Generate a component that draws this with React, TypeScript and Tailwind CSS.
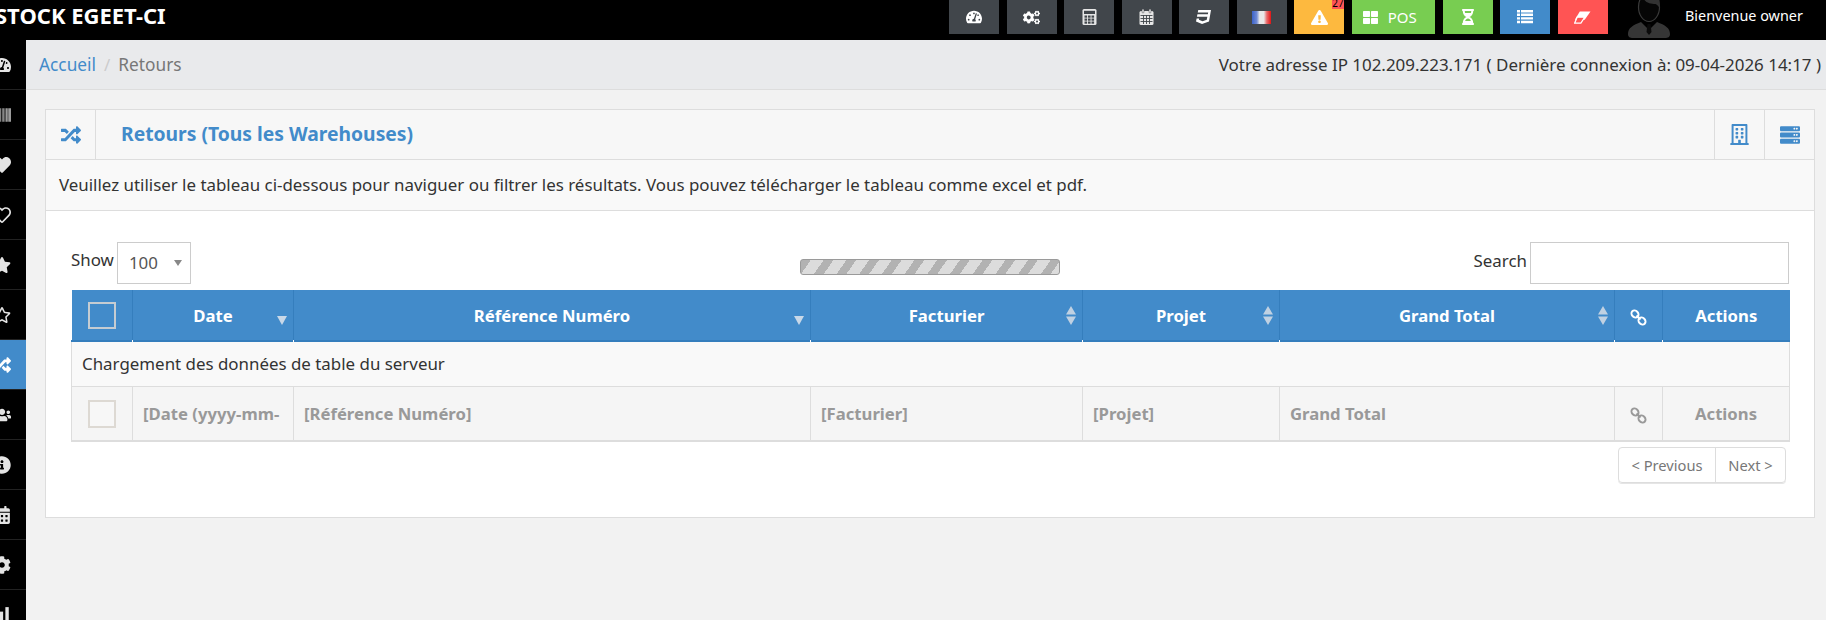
import { FaTachometerAlt, FaBarcode, FaHeart, FaRegHeart, FaStar, FaRegStar, FaRandom, FaUsers, FaInfoCircle, FaCalendarAlt, FaCog, FaCogs, FaCss3, FaExclamationTriangle, FaThLarge, FaHourglassHalf, FaRegBuilding, FaServer } from "react-icons/fa";
import type { ReactNode } from "react";

function BarsIcon({ className }: { className?: string }) {
  return (
    <svg viewBox="0 0 16 16" className={className} fill="currentColor">
      <rect x="1" y="9" width="3" height="6" /><rect x="6" y="5" width="3" height="10" /><rect x="11" y="1" width="3" height="14" />
    </svg>
  );
}

const sideIcons = [FaTachometerAlt, FaBarcode, FaHeart, FaRegHeart, FaStar, FaRegStar, FaRandom, FaUsers, FaInfoCircle, FaCalendarAlt, FaCog, BarsIcon];

function TopButton({ className, children }: { className: string; children: ReactNode }) {
  return <div className={`h-[34px] flex items-center justify-center text-white shrink-0 ${className}`}>{children}</div>;
}

function GridIcon({ calendar }: { calendar?: boolean }) {
  const xs = [2.5, 6, 9.5];
  const ys = [6.5, 9.5, 12.5];
  return (
    <svg width="15" height="16" viewBox="0 0 15 16" className="text-[#e6e6e6]">
      {calendar ? (
        <>
          <rect x="0.5" y="2" width="14" height="14" rx="1.5" fill="currentColor" />
          <rect x="3" y="0" width="2" height="4" rx="1" fill="currentColor" stroke="#41464b" strokeWidth="0.5" />
          <rect x="10" y="0" width="2" height="4" rx="1" fill="currentColor" stroke="#41464b" strokeWidth="0.5" />
          <path d="M1.5 6.5h12M1.5 9.5h12M1.5 12.5h12M4.5 6v9M7.5 6v9M10.5 6v9" stroke="#41464b" strokeWidth="0.9" />
        </>
      ) : (
        <>
          <rect x="0.5" y="0" width="14" height="16" rx="1.5" fill="currentColor" />
          <rect x="2" y="1.8" width="11" height="3.2" fill="#41464b" />
          {ys.map((y) => xs.map((x) => <rect key={`${x}-${y}`} x={x} y={y} width="2.6" height="2.2" fill="#41464b" />))}
        </>
      )}
    </svg>
  );
}

function ListIcon() {
  return (
    <svg width="16" height="14" viewBox="0 0 16 14" fill="currentColor">
      <path d="M0 0h3v2.4H0zM4 0h12v2.4H4zM0 3.6h3V6H0zM4 3.6h12V6H4zM0 7.2h3v2.4H0zM4 7.2h12v2.4H4zM0 10.8h3v2.4H0zM4 10.8h12v2.4H4z" />
    </svg>
  );
}

function EraserIcon() {
  return (
    <svg width="17" height="13" viewBox="0 0 17 13">
      <path d="M5.8 0.5h10.7l-5.8 8.2H0.8z" fill="#ffffff" />
      <path d="M3.2 6.2h7.6l-3.9 6H0.6z" fill="#ff5454" stroke="#ffffff" strokeWidth="1.2" />
    </svg>
  );
}

function LinkIcon({ className }: { className?: string }) {
  return (
    <svg viewBox="0 0 17 17" width="17" height="17" className={`inline-block align-middle ${className ?? ""}`} fill="none" stroke="currentColor">
      <ellipse cx="5" cy="5" rx="3.2" ry="3.8" strokeWidth="2" transform="rotate(-45 5 5)" />
      <ellipse cx="12" cy="12" rx="3.2" ry="3.8" strokeWidth="2" transform="rotate(-45 12 12)" />
      <path d="M6.5 6.5l4 4" strokeWidth="2" />
    </svg>
  );
}

function Avatar() {
  return (
    <svg width="45" height="38" viewBox="0 0 45 38" className="shrink-0">
      <path d="M2 34c0-6 5-9 13-12l8 8 8-8c8 3 13 6 13 12 0 3-2 4-5 4H7c-3 0-5-1-5-4z" fill="#363636" />
      <path d="M21.500 24h3l1 8-2.500 3-2.500-3z" fill="#0a0a0a" />
      <ellipse cx="23" cy="7" rx="10.500" ry="14.500" fill="#060606" stroke="#3a3a3a" strokeWidth="1.200" />
      <path d="M12.500 0h21v8c-1-2-2-3-4-4-4 0-9-1-11-4z" fill="#333333" />
    </svg>
  );
}

function Th({ children, sort, notch = true }: { children?: ReactNode; sort?: "desc" | "both"; notch?: boolean }) {
  return (
    <th className="relative border-r border-[#357ebd] last:border-r-0 p-0 pt-[1px] font-bold text-white text-[16.7px] text-center">
      {children}
      {sort === "desc" && (
        <svg width="10" height="9" viewBox="0 0 10 9" className="absolute right-[6px] top-[26px]"><path d="M0 0h10L5 9z" fill="#c8d8e8" /></svg>
      )}
      {sort === "both" && (
        <svg width="12" height="19" viewBox="0 0 12 19" className="absolute right-[5px] top-[16px]"><path d="M6 0l5 8.500H1zM1 10.500h10L6 19z" fill="#c0d1e2" /></svg>
      )}
      {notch && <span className="absolute -right-px -bottom-[2px] w-px h-[2px] bg-white" />}
    </th>
  );
}

function Td({ children, center }: { children?: ReactNode; center?: boolean }) {
  return <td className={`border-r border-[#dddddd] last:border-r-0 px-[10px] pt-[1px] font-bold text-[#999999] text-[16.7px] whitespace-nowrap overflow-hidden ${center ? "text-center" : ""}`}>{children}</td>;
}

export default function App() {
  return (
    <div className="w-[1826px] h-[620px] overflow-hidden bg-[#f2f2f2] text-[#333333] text-[16.9px] font-['Noto_Sans','Open_Sans',sans-serif] flex flex-col">
      <header className="h-10 bg-black shrink-0 flex items-start overflow-hidden">
        <div className="-ml-[5px] text-white font-bold text-[22px] leading-[30px] whitespace-nowrap">STOCK EGEET-CI</div>
        <nav className="ml-auto flex items-start">
          <div className="flex gap-[7.5px]">
            <TopButton className="w-[50px] bg-[#41464b]"><FaTachometerAlt size={16} /></TopButton>
            <TopButton className="w-[50px] bg-[#41464b]"><FaCogs size={17} /></TopButton>
            <TopButton className="w-[50px] bg-[#41464b]"><GridIcon /></TopButton>
            <TopButton className="w-[50px] bg-[#41464b]"><GridIcon calendar /></TopButton>
            <TopButton className="w-[50px] bg-[#41464b]"><FaCss3 size={16} /></TopButton>
            <TopButton className="w-[50px] bg-[#41464b]">
              <span className="w-[19px] h-[13px] bg-[linear-gradient(90deg,#3c63c9_0%,#6f8ad6_25%,#e8e8e8_40%,#e8e8e8_62%,#e86a6a_78%,#e01414_100%)]" />
            </TopButton>
            <TopButton className="w-[50px] bg-[#fdb93f] relative">
              <FaExclamationTriangle size={17} />
              <span className="absolute right-0 top-0 w-[12px] h-[9px] bg-[#ff5454] text-black text-[10px] leading-[7px] text-center">27</span>
            </TopButton>
            <TopButton className="w-[83.5px] bg-[#78cd51] gap-[10px] pr-[7px] text-[15px]"><FaThLarge size={15} />POS</TopButton>
            <TopButton className="w-[50px] bg-[#78cd51]"><FaHourglassHalf size={16} /></TopButton>
            <TopButton className="w-[50px] bg-[#428bca]"><ListIcon /></TopButton>
            <TopButton className="w-[50px] bg-[#ff5454]"><EraserIcon /></TopButton>
          </div>
          <div className="ml-[18.500px]"><Avatar /></div>
          <div className="ml-[14px] w-[141px] text-white text-[14.400px] leading-[32px] whitespace-nowrap">Bienvenue owner</div>
        </nav>
      </header>
      <div className="flex-1 flex min-h-0">
        <aside className="w-[26px] bg-black shrink-0 overflow-hidden">
          {sideIcons.map((Icon, i) => (
            <div key={i} className={`h-[50px] flex items-center border-b border-[#222222] text-[#e4e4e4] ${i === 6 ? "bg-[#428bca] text-white border-[#428bca]" : ""}`}>
              <Icon className="-ml-[7px] w-[18px] h-[18px] shrink-0" />
            </div>
          ))}
        </aside>
        <main className="flex-1 min-w-0">
          <div className="h-[50px] bg-[#e9eaec] border-b border-[#dddddd] flex items-center pl-[13px] pr-[5px] pt-[1px]">
            <a className="text-[#428bca] text-[17.300px]">Accueil</a>
            <span className="text-[#cccccc] mx-[8px]">/</span>
            <span className="text-[#777777] text-[17.300px]">Retours</span>
            <span className="ml-auto text-[16.950px]">Votre adresse IP 102.209.223.171 ( Dernière connexion à: 09-04-2026 14:17 )</span>
          </div>
          <section className="ml-[19px] mr-[11px] mt-[19px] h-[409px] bg-white border border-[#dddddd]">
            <div className="h-[50px] bg-[#f7f7f7] border-b border-[#dddddd] flex items-stretch">
              <div className="w-[50px] border-r border-[#dddddd] flex items-center justify-center text-[#428bca]"><FaRandom size={20} /></div>
              <h2 className="ml-[25px] self-center font-bold text-[19.300px] text-[#428bca]">Retours (Tous les Warehouses)</h2>
              <div className="ml-auto w-[50px] border-l border-[#dddddd] flex items-center justify-center text-[#428bca]"><FaRegBuilding size={21} /></div>
              <div className="w-[50px] border-l border-[#dddddd] flex items-center justify-center text-[#428bca]"><FaServer size={20} /></div>
            </div>
            <div className="h-[51px] bg-[#f9f9f9] border-b border-[#dddddd] flex items-center pl-[13px]">
              Veuillez utiliser le tableau ci-dessous pour naviguer ou filtrer les résultats. Vous pouvez télécharger le tableau comme excel et pdf.
            </div>
            <div className="px-[25px]">
              <div className="h-[79px] pt-[31px] flex items-start">
                <div className="flex items-start gap-[3px] w-[119px]">
                  <span className="leading-[36px]">Show</span>
                  <div className="w-[74px] h-[42px] border border-[#cccccc] flex items-center justify-between pl-[11px] pr-[8px] shrink-0">
                    <span className="text-[#555555]">100</span>
                    <svg width="8" height="6" viewBox="0 0 8 6"><path d="M0 0h8L4 6z" fill="#888888" /></svg>
                  </div>
                </div>
                <div className="w-[260px] h-[16px] ml-[610px] mt-[17px] rounded-[3px] bg-[repeating-linear-gradient(125deg,#b2b2b2_0px,#b2b2b2_8px,#dcdcdc_8px,#dcdcdc_18.6px)] border border-[#9a9a9a]" />
                <div className="flex items-start gap-[3px] ml-auto">
                  <span className="leading-[38px]">Search</span>
                  <div className="w-[259px] h-[42px] border border-[#cccccc]" />
                </div>
              </div>
              <table className="w-[1718px] table-fixed border-collapse">
                <colgroup>
                  <col className="w-[61px]" /><col className="w-[161px]" /><col className="w-[517px]" /><col className="w-[272px]" /><col className="w-[197px]" /><col className="w-[335px]" /><col className="w-[48px]" /><col className="w-[127px]" />
                </colgroup>
                <thead>
                  <tr className="h-[51px] bg-[#428bca] border-b-2 border-[#357ebd]">
                    <Th><span className="inline-block align-middle w-[28px] h-[27px] border-2 border-[#c5ccd2]" /></Th>
                    <Th sort="desc">Date</Th>
                    <Th sort="desc">Référence Numéro</Th>
                    <Th sort="both">Facturier</Th>
                    <Th sort="both">Projet</Th>
                    <Th sort="both">Grand Total</Th>
                    <Th><LinkIcon /></Th>
                    <Th notch={false}>Actions</Th>
                  </tr>
                </thead>
                <tbody>
                  <tr className="h-[45px] bg-[#f9f9f9] border-b border-x border-[#dddddd]">
                    <td colSpan={8} className="pl-[10px]">Chargement des données de table du serveur</td>
                  </tr>
                  <tr className="h-[55px] bg-[#f5f5f5] border-b-2 border-x border-[#dddddd]">
                    <Td center><span className="inline-block align-middle w-[28px] h-[28px] border-2 border-[#ddd9d3] bg-[#f7f7f7]" /></Td>
                    <Td>[Date (yyyy-mm-</Td>
                    <Td>[Référence Numéro]</Td>
                    <Td>[Facturier]</Td>
                    <Td>[Projet]</Td>
                    <Td>Grand Total</Td>
                    <Td center><LinkIcon /></Td>
                    <Td center>Actions</Td>
                  </tr>
                </tbody>
              </table>
              <div className="flex justify-end mt-[5px] pr-[3px]">
                <div className="h-[36px] flex border border-[#dddddd] rounded-[4px] text-[14.700px] text-[#777777] shadow-[0_1px_0_#e5e5e5]">
                  <span className="w-[97px] flex items-center justify-center border-r border-[#dddddd]">&lt; Previous</span>
                  <span className="w-[69px] flex items-center justify-center">Next &gt;</span>
                </div>
              </div>
            </div>
          </section>
        </main>
      </div>
    </div>
  );
}
